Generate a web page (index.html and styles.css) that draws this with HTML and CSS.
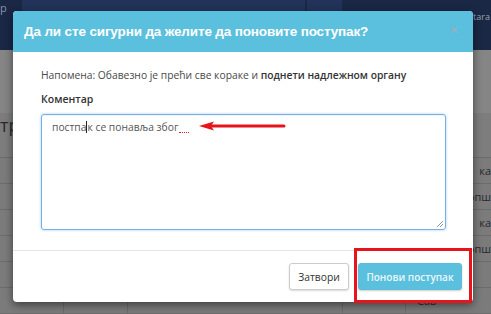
FILE: index.html
```html
<!DOCTYPE html>
<html>
<head>
<meta charset="utf-8">
<link rel="stylesheet" href="styles.css">
</head>
<body>
<div class="page">
  <div class="navbar">
    <span class="nav-logo">p</span>
    <div class="nav-box nav-box-wide"></div>
    <div class="nav-box nav-box-small"></div>
    <span class="nav-user">tara</span>
  </div>
  <div class="page-head"></div>
  <div class="page-title">тр</div>
  <div class="table">
    <div class="row"><div class="c1"></div><div class="c2"></div><div class="c3"></div><div class="c4"></div><div class="c5">ка</div></div>
    <div class="row"><div class="c1"></div><div class="c2"></div><div class="c3"></div><div class="c4"></div><div class="c5">опш</div></div>
    <div class="row"><div class="c1"></div><div class="c2"></div><div class="c3"></div><div class="c4"></div><div class="c5">ка</div></div>
    <div class="row"><div class="c1"></div><div class="c2"></div><div class="c3"></div><div class="c4"></div><div class="c5">опш</div></div>
    <div class="row"><div class="c1"></div><div class="c2"></div><div class="c3"></div><div class="c4"></div><div class="c5"></div></div>
    <div class="row"><div class="c1"></div><div class="c2"></div><div class="c3"></div><div class="c4"></div><div class="c5 c5-left">Сав</div></div>
  </div>
</div>

<div class="modal">
  <div class="modal-header">
    <h4 class="modal-title">Да ли сте сигурни да желите да поновите поступак?</h4>
    <span class="close">×</span>
  </div>
  <div class="modal-body">
    <p class="note">Напомена: Обавезно је прећи све кораке и <span class="note-strong">поднети надлежном органу</span></p>
    <label class="label">Коментар</label>
    <div class="textarea">
      <span class="typed">постпа<span class="caret"></span>к се понавља због</span><span class="squiggle"></span>
      <svg class="arrow" width="88" height="12" viewBox="0 0 88 12"><path d="M14 6 H86" stroke="#e8141b" stroke-width="3" stroke-linecap="round"/><path d="M1 6 L16 1.5 L13 6 L16 10.5 Z" fill="#e8141b"/></svg>
      <svg class="grip" width="9" height="9" viewBox="0 0 9 9"><path d="M8 2 L2 8 M8 5 L5 8" stroke="#888" stroke-width="0.9"/></svg>
    </div>
  </div>
  <div class="modal-footer">
    <button class="btn btn-default">Затвори</button>
    <button class="btn btn-info">Понови поступак</button>
  </div>
  <div class="highlight"></div>
</div>
</body>
</html>
```

FILE: styles.css
```css
html, body {
  margin: 0;
  padding: 0;
}
body {
  width: 491px;
  height: 314px;
  overflow: hidden;
  position: relative;
  font-family: "Open Sans", "Liberation Sans", sans-serif;
  background: #7b7b7b;
}
.page {
  display: flex;
  flex-direction: column;
  height: 314px;
}
.navbar {
  height: 52px;
  background: #1a2745;
  display: flex;
  align-items: flex-start;
  position: relative;
  color: #8d96a8;
  font-size: 11px;
}
.nav-logo {
  width: 22px;
  line-height: 16px;
  color: #8a93a6;
}
.nav-box {
  height: 14px;
  background: #223258;
}
.nav-box-wide {
  width: 283px;
}
.nav-box-small {
  width: 35px;
  margin-left: 2px;
}
.nav-user {
  margin-left: auto;
  margin-top: 11px;
  color: #9aa3b5;
  font-size: 9px;
  line-height: 12px;
  padding-right: 1px;
}
.page-head {
  height: 66px;
  background: #858585;
}
.page-title {
  height: 47px;
  font-size: 18px;
  line-height: 20px;
  padding-top: 2px;
  color: #2a2a2a;
  background: #7d7d7d;
  box-sizing: border-box;
  border-bottom: 1px solid #6c6c6c;
}
.table {
  display: flex;
  flex-direction: column;
}
.row {
  display: grid;
  grid-template-columns: 64px 64px 215px 63px 85px;
  height: 25px;
  border-bottom: 1px solid #6c6c6c;
  font-size: 11px;
  color: #2a2a2a;
}
.row > div {
  border-right: 1px solid #6c6c6c;
  display: flex;
  align-items: center;
  padding-left: 10px;
}
.row > .c5 {
  border-right: none;
  justify-content: flex-end;
  padding-right: 0;
  white-space: nowrap;
  overflow: hidden;
}
.row > .c5-left {
  justify-content: flex-start;
  padding-left: 11px;
}

.modal {
  position: absolute;
  left: 13px;
  top: 11px;
  width: 460px;
  height: 291px;
  background: #fff;
  border-radius: 4px;
  box-shadow: 0 3px 9px rgba(0,0,0,0.5);
  display: flex;
  flex-direction: column;
}
.modal-header {
  height: 41px;
  background: #5bc0de;
  border-radius: 4px 4px 0 0;
  display: flex;
  align-items: center;
  padding: 0 11px;
  box-sizing: border-box;
}
.modal-title {
  margin: 0;
  flex: 1;
  color: #fff;
  font-family: "Liberation Sans", Arial, sans-serif;
  font-weight: bold;
  font-size: 13.5px;
  letter-spacing: -0.15px;
}
.close {
  color: #8fb3c2;
  font-size: 14px;
  font-weight: bold;
  margin-right: 4px;
  margin-top: -4px;
}
.modal-body {
  padding: 16px 27px 0 28px;
  height: 199px;
  box-sizing: border-box;
  border-bottom: 1px solid #e5e5e5;
}
.note {
  margin: 0;
  font-size: 10.3px;
  line-height: 14px;
  color: #4a4a4a;
}
.note-strong {
  color: #333;
  font-weight: 600;
}
.label {
  display: block;
  margin-top: 10px;
  font-size: 10.5px;
  font-weight: 600;
  line-height: 14px;
  color: #333;
}
.textarea {
  position: relative;
  margin-top: 8px;
  height: 116px;
  border: 1px solid #74b0e4;
  border-radius: 3px;
  box-shadow: 0 0 3px rgba(102,175,233,0.6), inset 0 1px 1px rgba(0,0,0,0.05);
  box-sizing: border-box;
  padding: 5px 10px;
  font-size: 10.3px;
  color: #555;
  line-height: 14px;
}
.caret {
  display: inline-block;
  width: 1px;
  height: 12px;
  background: #222;
  vertical-align: -2px;
}
.squiggle {
  display: inline-block;
  width: 10px;
  height: 2px;
  margin-left: 1px;
  border-bottom: 1px dotted #e02020;
  vertical-align: -2px;
}
.arrow {
  position: absolute;
  left: 156px;
  top: 5px;
}
.grip {
  position: absolute;
  right: 1px;
  bottom: 1px;
}
.modal-footer {
  flex: 1;
  display: flex;
  justify-content: flex-end;
  align-items: flex-start;
  gap: 9px;
  padding: 12px 11px 0 0;
}
.btn {
  height: 27px;
  border-radius: 3px;
  font-family: "Open Sans", "Liberation Sans", sans-serif;
  font-size: 10.3px;
  padding: 0;
  white-space: nowrap;
  cursor: pointer;
}
.btn-default {
  width: 60px;
  background: #fff;
  border: 1px solid #ccc;
  color: #333;
  box-shadow: 0 1px 2px rgba(0,0,0,0.15);
}
.btn-info {
  width: 104px;
  background: #5bc0de;
  border: 1px solid #5bbcd9;
  color: #eaf7fb;
  font-weight: 600;
  font-size: 10px;
  box-shadow: 0 1px 2px rgba(0,0,0,0.2);
}
.highlight {
  position: absolute;
  left: 341px;
  top: 237px;
  width: 118px;
  height: 55px;
  border: 3px solid #e8141b;
  box-sizing: border-box;
}
```
